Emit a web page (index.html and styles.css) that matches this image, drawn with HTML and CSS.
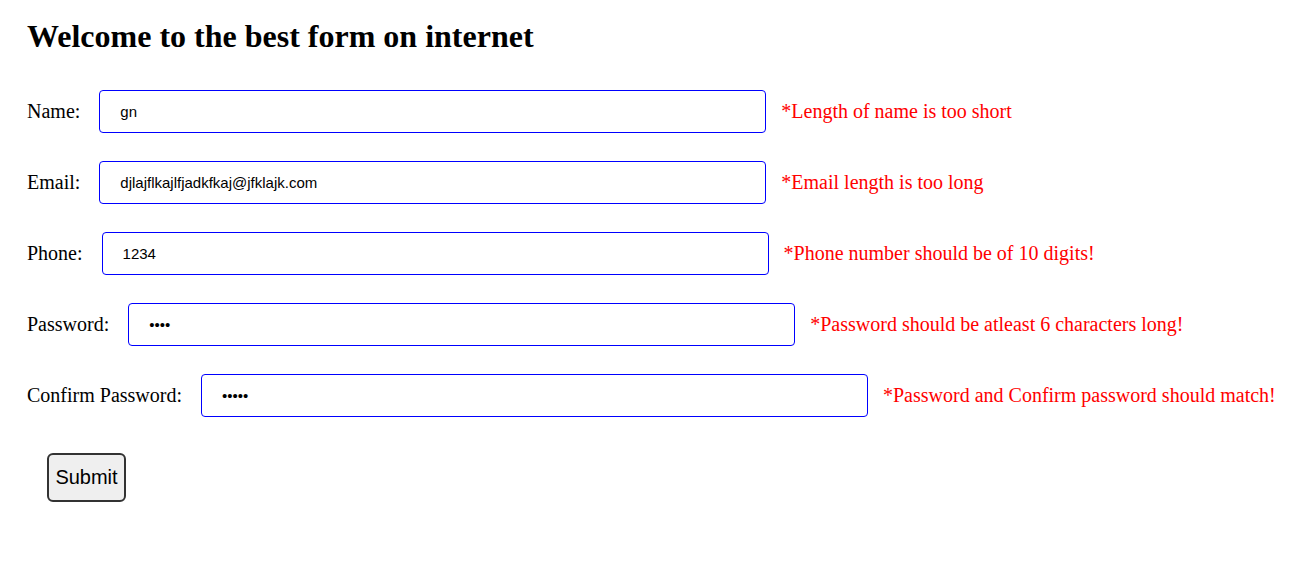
FILE: index.html
```html
<!DOCTYPE html>
<html lang="en">
<head>
    <title>Form</title>
    <link rel="stylesheet" href="styles.css">
</head>
<body>
    <div class="page">
        <h1 class="title">Welcome to the best form on internet</h1>
        <form class="MyForm" onsubmit="return false">
            <div class="FormRow">
                <label class="FormLabel" for="name">Name:</label>
                <input class="FormInput" type="text" id="name" value="gn">
                <span class="FormError">*Length of name is too short</span>
            </div>
            <div class="FormRow">
                <label class="FormLabel" for="email">Email:</label>
                <input class="FormInput" type="text" id="email" value="djlajflkajlfjadkfkaj@jfklajk.com">
                <span class="FormError">*Email length is too long</span>
            </div>
            <div class="FormRow">
                <label class="FormLabel" for="phone">Phone:</label>
                <input class="FormInput" type="text" id="phone" value="1234">
                <span class="FormError">*Phone number should be of 10 digits!</span>
            </div>
            <div class="FormRow">
                <label class="FormLabel" for="pass">Password:</label>
                <input class="FormInput" type="password" id="pass" value="abcd">
                <span class="FormError">*Password should be atleast 6 characters long!</span>
            </div>
            <div class="FormRow">
                <label class="FormLabel" for="cpass">Confirm Password:</label>
                <input class="FormInput" type="password" id="cpass" value="abcde">
                <span class="FormError">*Password and Confirm password should match!</span>
            </div>
            <button class="SubmitBtn" type="submit">Submit</button>
        </form>
    </div>
</body>
</html>
```

FILE: styles.css
```css
body {
    margin: 0;
    font-family: "Liberation Serif", "Times New Roman", serif;
    background: white;
    color: black;
}

.page {
    padding: 0 27px;
}

h1.title {
    font-size: 32px;
    margin: 18px 0 35px 0;
}

.FormRow {
    display: flex;
    align-items: center;
    margin-bottom: 28px;
    white-space: nowrap;
}

.FormLabel {
    flex-shrink: 0;
    font-size: 20px;
}

input.FormInput {
    flex-shrink: 0;
    box-sizing: border-box;
    width: 667px;
    height: 43px;
    margin-left: 19px;
    padding: 0 20px;
    border: 1px solid blue;
    border-radius: 4px;
    font-family: "Liberation Sans", Arial, sans-serif;
    font-size: 15px;
    color: black;
    outline: none;
}

.FormError {
    flex-shrink: 0;
    margin-left: 15px;
    font-size: 20px;
    color: red;
}

button.SubmitBtn {
    margin: 8px 0 0 20px;
    width: 79px;
    height: 49px;
    font-family: "Liberation Sans", Arial, sans-serif;
    font-size: 20px;
    background: #efefef;
    border: 2px solid #333;
    border-radius: 6px;
    color: black;
    cursor: pointer;
}
```
